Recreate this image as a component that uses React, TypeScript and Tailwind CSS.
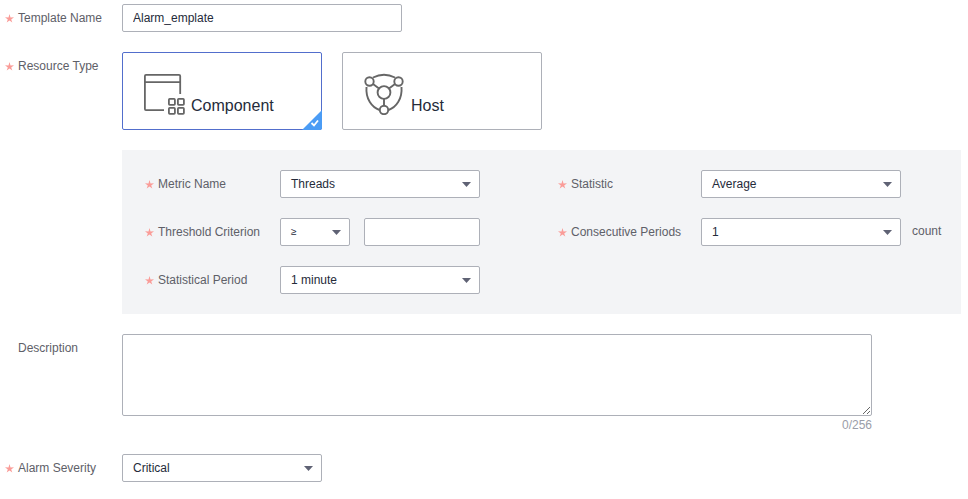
const labelText = "text-[#5e6068]"

function Star() {
  return (
    <svg width="9" height="9" viewBox="0 0 9 9" className="shrink-0">
      <path d="M4.5 0.1 L5.5 3.4 L9 3.35 L6.2 5.4 L7.3 8.6 L4.5 6.6 L1.7 8.6 L2.8 5.4 L0 3.35 L3.5 3.4 Z" fill="#fa9c98" />
    </svg>
  )
}

function Caret() {
  return (
    <svg width="9" height="5" viewBox="0 0 9 5" className="shrink-0">
      <path d="M0 0 H9 L4.5 5 Z" fill="#5f6274" />
    </svg>
  )
}

function Select({ value, className, valueClass }: { value: string; className: string; valueClass?: string }) {
  return (
    <div className={`flex h-7 items-center justify-between rounded-[2px] border border-[#adb0b8] bg-white pl-[10px] pr-2 text-[#252b3a] ${className}`}>
      <span className={valueClass}>{value}</span>
      <Caret />
    </div>
  )
}

function RequiredLabel({ text, className }: { text: string; className: string }) {
  return (
    <div className={`flex h-7 shrink-0 items-center gap-1 ${labelText} ${className}`}>
      <Star />
      <span>{text}</span>
    </div>
  )
}

function ComponentIcon() {
  return (
    <svg width="41" height="41" viewBox="0 0 41 41" fill="none" stroke="#666" strokeWidth="1.8">
      <path d="M20 36.2 H2 Q0.9 36.2 0.9 35 V2 Q0.9 0.9 2 0.9 H35 Q36.2 0.9 36.2 2 V20" />
      <path d="M0.9 8.2 H36.2" />
      <rect x="24.9" y="24.9" width="6" height="6" rx="0.8" />
      <rect x="33.9" y="24.9" width="6" height="6" rx="0.8" />
      <rect x="24.9" y="33.9" width="6" height="6" rx="0.8" />
      <rect x="33.9" y="33.9" width="6" height="6" rx="0.8" />
    </svg>
  )
}

function HostIcon() {
  return (
    <svg width="40" height="42" viewBox="0 0 40 42" fill="none" stroke="#666" strokeWidth="1.9">
      <path d="M9 4.5 Q20 -1 31 4.5" />
      <path d="M2.5 14 C1.5 26 8 34.5 15.5 37" />
      <path d="M37.5 14 C38.5 26 32 34.5 24.5 37" />
      <path d="M9 11 L15 15.5 M31 11 L25 15.5 M20 26 V33" />
      <circle cx="5.5" cy="8.5" r="4.2" />
      <circle cx="34.5" cy="8.5" r="4.2" />
      <circle cx="20" cy="19.5" r="6.4" />
      <circle cx="20" cy="37" r="4.2" />
    </svg>
  )
}

export default function App() {
  return (
    <div className="flex h-[499px] w-[968px] flex-col bg-white pr-[7px] pt-1 font-['Liberation_Sans',Arial,sans-serif] text-xs leading-[14px]">
      {/* Template name */}
      <div className="flex">
        <RequiredLabel text="Template Name" className="w-[122px] pl-[5px]" />
        <input
          defaultValue="Alarm_emplate"
          className="h-7 w-[280px] rounded-[2px] border border-[#adb0b8] bg-white px-[10px] text-[#252b3a] outline-none"
        />
      </div>

      {/* Resource type */}
      <div className="mt-5 flex">
        <RequiredLabel text="Resource Type" className="w-[122px] pl-[5px]" />
        <div className="flex gap-5">
          <div className="relative flex h-[78px] w-[200px] items-end gap-[6px] rounded-[2px] border border-[#526ecc] pb-[14px] pl-[21px] text-base leading-[18px] text-[#252b3a]">
            <ComponentIcon />
            <span>Component</span>
            <svg width="20" height="20" viewBox="0 0 20 20" className="absolute -bottom-px -right-px">
              <path d="M20 0 V18 Q20 20 18 20 H0 Z" fill="#4b9cf5" />
              <path d="M9.5 13 L12 15.5 L16 10.5" fill="none" stroke="#fff" strokeWidth="1.8" />
            </svg>
          </div>
          <div className="flex h-[78px] w-[200px] items-end gap-[7px] rounded-[2px] border border-[#adb0b8] pb-[14px] pl-[21px] text-base leading-[18px] text-[#252b3a]">
            <HostIcon />
            <span>Host</span>
          </div>
        </div>
      </div>

      {/* Metric settings */}
      <div className="ml-[122px] mt-5 flex h-[164px] gap-[78px] bg-[#f3f4f6] py-5 pl-[23px]">
        <div className="flex flex-col gap-5">
          <div className="flex">
            <RequiredLabel text="Metric Name" className="w-[135px]" />
            <Select value="Threads" className="w-[200px]" />
          </div>
          <div className="flex">
            <RequiredLabel text="Threshold Criterion" className="w-[135px]" />
            <Select value="≥" className="w-[70px]" valueClass="text-[10px]" />
            <div className="ml-[14px] h-7 w-[116px] rounded-[2px] border border-[#adb0b8] bg-white" />
          </div>
          <div className="flex">
            <RequiredLabel text="Statistical Period" className="w-[135px]" />
            <Select value="1 minute" className="w-[200px]" />
          </div>
        </div>
        <div className="flex flex-col gap-5">
          <div className="flex">
            <RequiredLabel text="Statistic" className="w-[143px]" />
            <Select value="Average" className="w-[200px]" />
          </div>
          <div className="flex items-center">
            <RequiredLabel text="Consecutive Periods" className="w-[143px]" />
            <Select value="1" className="w-[200px]" />
            <span className={`ml-[11px] -translate-y-px ${labelText}`}>count</span>
          </div>
        </div>
      </div>

      {/* Description */}
      <div className="mt-5 flex">
        <div className={`w-[122px] shrink-0 pl-[18px] pt-[7px] ${labelText}`}>Description</div>
        <div className="w-[750px]">
          <textarea className="block h-[82px] w-full rounded-[2px] border border-[#adb0b8] bg-white outline-none" />
          <div className="mt-0.5 text-right text-[#9a9da8]">0/256</div>
        </div>
      </div>

      {/* Alarm severity */}
      <div className="mt-[22px] flex">
        <RequiredLabel text="Alarm Severity" className="w-[122px] pl-[5px]" />
        <Select value="Critical" className="w-[200px]" />
      </div>
    </div>
  )
}
